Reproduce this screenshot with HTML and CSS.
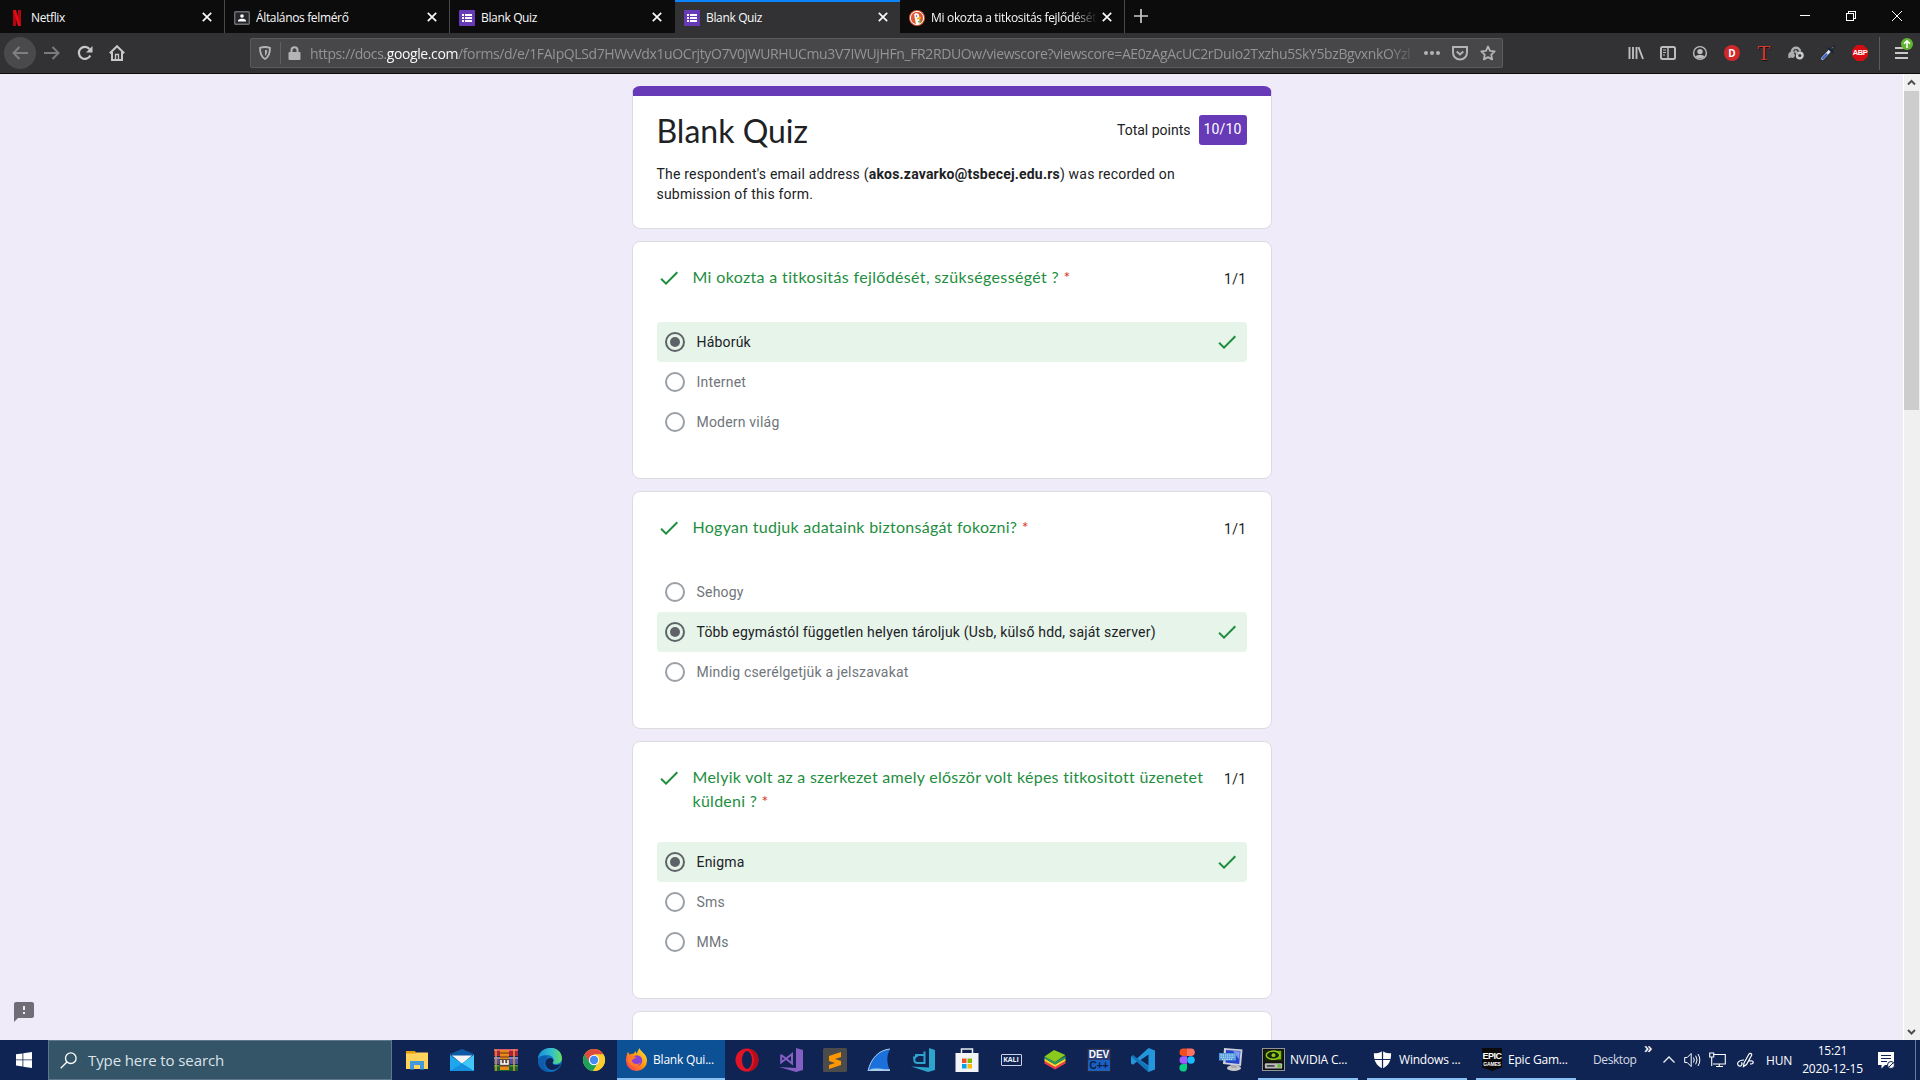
FILE: index.html
```html
<!DOCTYPE html>
<html lang="en">
<head>
<meta charset="utf-8">
<title>Blank Quiz</title>
<link rel="stylesheet" href="styles.css">
</head>
<body>
<svg class="defs" width="0" height="0">
  <symbol id="close" viewBox="0 0 10 10"><path d="M.8.8l8.400 8.400M9.200.8L.8 9.200" stroke="currentColor" stroke-width="1.700" fill="none"/></symbol>
  <symbol id="form" viewBox="0 0 16 16"><rect width="16" height="16" rx="1" fill="#673ab7"/><path d="M3 4h2v2H3zM6 4h7v2H6zM3 7h2v2H3zM6 7h7v2H6zM3 10h2v2H3zM6 10h7v2H6z" fill="#fff"/></symbol>
  <symbol id="check" viewBox="0 0 24 24"><path d="M9 16.200L4.800 12l-1.400 1.400L9 19 21 7l-1.400-1.400z" fill="#1e8e3e"/></symbol>
</svg>
<div class="screen">
  <header class="tabs">
    <div class="tab">
      <svg class="fav" viewBox="0 0 16 16"><path d="M4 0h3v16H4zM9 0h3v16H9z" fill="#b1060f"/><path d="M4 0h3l5 16H9z" fill="#e50914"/></svg>
      <span class="tab-name">Netflix</span><svg class="x"><use href="#close"/></svg>
    </div>
    <div class="tab">
      <svg class="fav" viewBox="0 0 16 16"><rect x=".7" y="1.700" width="14.600" height="12.600" rx="1" fill="#25272a" stroke="#6b6e73" stroke-width="1.400"/><circle cx="8" cy="6" r="1.800" fill="#fff"/><path d="M4 11.500V10.500C4 9.200 6.500 8.700 8 8.700s4 .5 4 1.800v1z" fill="#fff"/></svg>
      <span class="tab-name">Általános felmérő</span><svg class="x"><use href="#close"/></svg>
    </div>
    <div class="tab">
      <svg class="fav"><use href="#form"/></svg>
      <span class="tab-name">Blank Quiz</span><svg class="x"><use href="#close"/></svg>
    </div>
    <div class="tab active">
      <svg class="fav"><use href="#form"/></svg>
      <span class="tab-name">Blank Quiz</span><svg class="x"><use href="#close"/></svg>
    </div>
    <div class="tab">
      <svg class="fav" viewBox="0 0 16 16"><circle cx="8" cy="8" r="8" fill="#de5833"/><circle cx="8" cy="8" r="6.600" fill="none" stroke="#fff" stroke-width="1"/><path d="M5.200 5C5.200 2.500 10.300 2.500 10.300 6.500L10.800 13.600Q8.800 14.600 6.800 13.800z" fill="#fff"/><circle cx="7.500" cy="6" r=".8" fill="#2d4f8e"/><path d="M8 7.800l4-.8v1.600l-3.800.8z" fill="#fdb20a"/><path d="M9 11l2.800-.8v2.500l-2.800-.4z" fill="#65bc46"/></svg>
      <span class="tab-name long">Mi okozta a titkositás fejlődését, szükségességét</span><svg class="x"><use href="#close"/></svg>
    </div>
    <svg class="plus" viewBox="0 0 14 14"><path d="M7 0v14M0 7h14" stroke="#c9c9ca" stroke-width="1.700"/></svg>
    <div class="win">
      <svg viewBox="0 0 46 32"><path d="M18 15.500h10" stroke="#fff"/></svg>
      <svg viewBox="0 0 46 32"><path d="M18.500 13.500h7v7h-7zM20.500 13.500v-2h7v7h-2" stroke="#fff" fill="none"/></svg>
      <svg viewBox="0 0 46 32"><path d="M18 11l10 10M28 11L18 21" stroke="#fff"/></svg>
    </div>
  </header>

  <nav class="toolbar">
    <div class="navs">
      <span class="slot back"><svg width="16" height="16" viewBox="0 0 16 16"><path d="M16 8H1.500M7.500 2L1.500 8l6 6" fill="none" stroke="#7f7f81" stroke-width="2"/></svg></span>
      <span class="slot"><svg width="16" height="16" viewBox="0 0 16 16"><path d="M0 8h14.500M8.500 2l6 6-6 6" fill="none" stroke="#7b7b7d" stroke-width="2"/></svg></span>
      <span class="slot"><svg width="16" height="16" viewBox="0 0 16 16"><path d="M13.300 10.500A6 6 0 1 1 12.500 4" fill="none" stroke="#c8c8c9" stroke-width="2.200"/><path d="M15.500 1v6.500H9z" fill="#c8c8c9"/></svg></span>
      <span class="slot"><svg width="16" height="16" viewBox="0 0 16 16"><path d="M.8 8.200L8 1.200l7.200 7M3 7v7.900h10V7" fill="none" stroke="#c8c8c9" stroke-width="2"/><path d="M6.500 14V9.500h3V14" fill="none" stroke="#c8c8c9" stroke-width="1.300"/></svg></span>
    </div>
    <div class="urlbar">
      <svg class="shield" width="12" height="14" viewBox="0 0 12 14"><path d="M6 1c1.500 0 3.500.3 5 .8C11 7 10 11 6 13 2 11 1 7 1 1.800 2.500 1.300 4.500 1 6 1z" fill="none" stroke="#b4b4b5" stroke-width="1.800"/><path d="M6 4v6c1.500-1.500 2.200-3.500 2.300-5.600C7.500 4.100 7 4 6 4z" fill="#b4b4b5"/></svg>
      <i class="bar"></i>
      <svg class="lock" width="13" height="14" viewBox="0 0 13 14"><path d="M3.500 7V4.200a3 3 0 0 1 6 0V7" fill="none" stroke="#b4b4b5" stroke-width="2"/><rect x=".5" y="6" width="12" height="8" rx="1" fill="#b4b4b5"/></svg>
      <div class="url"><span>https://docs.</span><span class="host">google.com</span><span>/forms/d/e/1FAIpQLSd7HWvVdx1uOCrjtyO7V0jWURHUCmu3V7IWUjHFn_FR2RDUOw/viewscore?viewscore=AE0zAgAcUC2rDuIo2Txzhu5SkY5bzBgvxnkOYzl</span></div>
      <div class="acts">
        <svg viewBox="0 0 16 16"><circle cx="2" cy="8" r="2"/><circle cx="8" cy="8" r="2"/><circle cx="14" cy="8" r="2"/></svg>
        <svg viewBox="0 0 16 16"><path d="M1 2h14v5.500a7 7 0 0 1-14 0z" fill="none" stroke="#b4b4b5" stroke-width="2"/><path d="M4.700 6.500L8 9.500l3.300-3" fill="none" stroke="#b4b4b5" stroke-width="2"/></svg>
        <svg viewBox="0 0 16 16"><path d="M8 1.500l2 4.300 4.700.6-3.400 3.300.8 4.700L8 12.100l-4.100 2.300.8-4.700L1.300 6.400 6 5.800z" fill="none" stroke="#b4b4b5" stroke-width="1.800" stroke-linejoin="round"/></svg>
      </div>
    </div>
    <div class="exts">
      <span class="slot"><svg viewBox="0 0 16 16"><path d="M1.500 2v12M5 2v12M8.500 2v12M10.500 2.200L15 14" stroke="#bdbdbe" stroke-width="1.900"/></svg></span>
      <span class="slot"><svg viewBox="0 0 16 16"><rect x="1" y="2" width="14" height="12" rx="1.500" fill="none" stroke="#bdbdbe" stroke-width="2"/><path d="M8 2v12" stroke="#bdbdbe" stroke-width="1.500"/><path d="M3 5h3M3 7.500h3M3 10h2" stroke="#bdbdbe"/></svg></span>
      <span class="slot"><svg viewBox="0 0 16 16"><circle cx="8" cy="8" r="6.400" fill="none" stroke="#bdbdbe" stroke-width="1.400"/><circle cx="8" cy="6.600" r="2.700" fill="#bdbdbe"/><path d="M3.500 11.500C5 9.600 11 9.600 12.500 11.500 11 14 5 14 3.500 11.500z" fill="#bdbdbe"/></svg></span>
      <span class="slot"><b class="dis">D</b></span>
      <span class="slot"><b class="tt">T</b></span>
      <span class="slot"><svg viewBox="0 0 16 16" fill="none" stroke="#aeb0b0" stroke-width="2.400"><path d="M1.500 13V9.500A3 3 0 0 1 6 8M4 6.500a4 3.800 0 0 1 8 0"/><circle cx="11.800" cy="10.500" r="2.800" stroke="#c9cbcb"/><circle cx="4.500" cy="10.500" r="1.200"/><path d="M7 5.500l3 4"/></svg></span>
      <span class="slot"><svg viewBox="0 0 16 16"><path d="M2.500 13.500L10 5.500" stroke="#dfe8f2" stroke-width="2.600" stroke-linecap="round"/><path d="M2.800 13.200L6.500 9.300" stroke="#3468d8" stroke-width="2" stroke-linecap="round"/><path d="M9 3.500l3.500 3.500M11 5.500l3-3.500" stroke="#1a2433" stroke-width="2.400" stroke-linecap="round"/><path d="M12 3.500l1.500-1.500" stroke="#8d97a5"/></svg></span>
      <span class="slot"><b class="abp">ABP</b></span>
    </div>
    <i class="bar2"></i>
    <div class="menu"><i></i><i></i><i></i>
      <svg class="badge" viewBox="0 0 12 12"><circle cx="6" cy="6" r="6" fill="#62b532"/><path d="M6 10V3M3 5.800L6 2.800l3 3" fill="none" stroke="#fff" stroke-width="1.500"/></svg>
    </div>
  </nav>

  <main class="page">
    <div class="forms">
      <section class="card head">
        <div class="headrow"><h1>Blank Quiz</h1><div class="total"><span>Total points</span><span class="score">10/10</span></div></div>
        <p>The respondent's email address (<b>akos.zavarko@tsbecej.edu.rs</b>) was recorded on<br>submission of this form.</p>
      </section>

      <section class="card">
        <div class="q"><svg class="ck"><use href="#check"/></svg><h2 class="q1">Mi okozta a titkositás fejlődését, szükségességét ? <em>*</em></h2><span class="pts">1/1</span></div>
        <div class="opt right"><i class="radio on"></i><span>Háborúk</span><svg class="ck"><use href="#check"/></svg></div>
        <div class="opt"><i class="radio"></i><span>Internet</span></div>
        <div class="opt"><i class="radio"></i><span>Modern világ</span></div>
      </section>

      <section class="card">
        <div class="q"><svg class="ck"><use href="#check"/></svg><h2>Hogyan tudjuk adataink biztonságát fokozni? <em>*</em></h2><span class="pts">1/1</span></div>
        <div class="opt"><i class="radio"></i><span>Sehogy</span></div>
        <div class="opt right"><i class="radio on"></i><span>Több egymástól független helyen tároljuk (Usb, külső hdd, saját szerver)</span><svg class="ck"><use href="#check"/></svg></div>
        <div class="opt"><i class="radio"></i><span>Mindig cserélgetjük a jelszavakat</span></div>
      </section>

      <section class="card">
        <div class="q two"><svg class="ck"><use href="#check"/></svg><h2>Melyik volt az a szerkezet amely először volt képes titkositott üzenetet<br>küldeni ? <em>*</em></h2><span class="pts">1/1</span></div>
        <div class="opt right"><i class="radio on"></i><span>Enigma</span><svg class="ck"><use href="#check"/></svg></div>
        <div class="opt"><i class="radio"></i><span>Sms</span></div>
        <div class="opt"><i class="radio"></i><span>MMs</span></div>
      </section>

      <section class="card next"></section>
    </div>
    <svg class="report" viewBox="2 2 20 20"><path d="M20 2H4c-1.100 0-2 .9-2 2v18l4-4h14c1.100 0 2-.9 2-2V4c0-1.100-.9-2-2-2zm-7 12h-2v-2h2v2zm0-4h-2V6h2v4z" fill="#716d77"/></svg>
    <div class="scroll">
      <svg viewBox="0 0 17 17"><path d="M5 10.500L8.500 7l3.500 3.500" fill="none" stroke="#505050" stroke-width="2"/></svg>
      <div class="thumb"></div>
      <svg class="down" viewBox="0 0 17 17"><path d="M5 7l3.500 3.500L12 7" fill="none" stroke="#505050" stroke-width="2"/></svg>
    </div>
  </main>

  <footer class="taskbar">
    <div class="start"><svg width="16" height="16" viewBox="0 0 16 16"><path d="M0 2.300l6.500-.9v6.100H0zM7.300 1.300L16 0v7.500H7.300zM0 8.300h6.500v6.200L0 13.600zM7.300 8.300H16V16l-8.700-1.300z" fill="#fff"/></svg></div>
    <div class="search"><svg width="17" height="17" viewBox="0 0 17 17"><circle cx="10.800" cy="6.200" r="5.300" fill="none" stroke="#fff" stroke-width="1.300"/><path d="M7 10L.7 16.300" stroke="#fff" stroke-width="1.300"/></svg><span>Type here to search</span></div>
    <div class="apps">
      <span><svg viewBox="0 0 24 24"><path d="M0 4.500h22v16.500H0z" fill="#ffd35c"/><path d="M0 3h9l1.500 2.500H0z" fill="#e5a00d"/><path d="M4 13h14v8.500h-4V17H8v4.500H4z" fill="#3f9bdc"/></svg></span>
      <span><svg viewBox="0 0 24 24"><path d="M0 6l12-5 12 5v3H0z" fill="#0c59a4"/><path d="M2 7.500h20L12 16z" fill="#f4f4f4"/><path d="M0 7l12 8.500L24 7v16H0z" fill="#1fa7ee"/><path d="M24 7v16L12 15.500z" fill="#40c6f7"/><path d="M0 23l12-7.500L24 23z" fill="#1490df"/></svg></span>
      <span><svg viewBox="0 0 24 24"><path d="M0 1h24v7H0z" fill="#b0203c"/><path d="M0 1h24v2H0z" fill="#dc5b72"/><path d="M0 9h24v7H0z" fill="#5351a8"/><path d="M0 9h24v2H0z" fill="#8786cf"/><path d="M0 17h24v6H0z" fill="#17632b"/><path d="M0 17h24v1.500H0z" fill="#40a351"/><path d="M2 1v22M20 1v22" stroke="#d59b35" stroke-width="1.500"/><path d="M6 2h9v20H6z" fill="#e68a1b"/><path d="M6 5h9M6 9h9M6 18h9" stroke="#6c3010"/><path d="M5 11h11v7H5z" fill="#5b4638"/><path d="M7 12v4h7v-4M10.500 12v4" fill="none" stroke="#fff" stroke-width="1.500"/></svg></span>
      <span><svg viewBox="0 0 24 24"><defs><linearGradient id="eg" x2="1"><stop stop-color="#1690dc"/><stop offset=".6" stop-color="#35c1c8"/><stop offset="1" stop-color="#68e05b"/></linearGradient></defs><circle cx="12" cy="12" r="12" fill="#1173c7"/><path d="M0 10C2-3 23-4 24 10c0 5-4 6-7 6-2 0-3-1-2-2 2-3-1-7-6-7-4 0-7 1-9 5z" fill="url(#eg)"/><path d="M15 14c-1 1 0 3 3 3 2 0 3.500-.5 5-1.500C20 23 11 24 8 18c-2-4 1-8 4-8 3 0 4 2 3 4z" fill="#102454"/><path d="M8 12c-4 4 0 11 6 11.800C4 25-1 18 0 11c2-4 7-4 10-2-1 1-1 1-2 3z" fill="#0e5cad"/></svg></span>
      <span><svg viewBox="0 0 24 24"><circle cx="12" cy="12" r="11" fill="#fccd2d"/><path d="M2.500 6.500A11 11 0 0 1 21.500 6.500H12l-5 8z" fill="#de4b3d"/><path d="M2.500 6.500A11 11 0 0 0 11 23l5-8.500H7.500z" fill="#1ba15b"/><path d="M12 6.500h9.500A11 11 0 0 1 11 23l6-9z" fill="#fccd2d"/><circle cx="12" cy="12" r="5.200" fill="#fff"/><circle cx="12" cy="12" r="4.200" fill="#4689f2"/></svg></span>
    </div>
    <div class="task current"><svg viewBox="0 0 24 24"><defs><linearGradient id="ff" x1="1" y1="0" x2="0" y2="1"><stop stop-color="#fff044"/><stop offset=".45" stop-color="#ff980e"/><stop offset="1" stop-color="#ff2a60"/></linearGradient></defs><path d="M3 4l2 3c1-1 3-1 4-1l2-3 1 3 3-6c1 4 8 6 8 13a11 11 0 0 1-22 0C1 9 2 7 3 4z" fill="url(#ff)"/><circle cx="12.500" cy="13" r="5.500" fill="#8a42d6"/><path d="M4 9c4-2 7 0 8 2-3-1-3 1-5 2 1 4 6 5 9 2-1 5-11 6-13-2z" fill="#ff7a28"/></svg><span>Blank Qui...</span></div>
    <div class="apps">
      <span><svg viewBox="0 0 24 24"><ellipse cx="12" cy="12" rx="11.500" ry="11.500" fill="#e31426"/><path d="M13 1c14 0 14 22 0 22 8-4 8-18 0-22z" fill="#b40d1c"/><ellipse cx="12" cy="12" rx="5" ry="9" fill="#102454"/></svg></span>
      <span><svg viewBox="0 0 24 24"><path d="M17 0l7 2v20l-7 2L0 19l17 1z" fill="#865fc5"/><path d="M2.200 6.500v8L13 6v9.500L2.200 7" fill="none" stroke="#865fc5" stroke-width="2"/></svg></span>
      <span><svg viewBox="0 0 24 24"><rect width="24" height="24" rx="1.500" fill="#4b4b4b"/><path d="M6 8l12-4v5l-6 2 6 2v4L6 21v-4l6-2-6-2z" fill="#ff9800"/></svg></span>
      <span><svg viewBox="0 0 24 24"><path d="M1 23C4 10 12 2 23 1c-4 7-3 15 0 22z" fill="#1b70dc"/><path d="M1 23C4 10 12 2 23 1" fill="none" stroke="#a9d0f4"/><path d="M1 23c5-5 15-1 22-2v2z" fill="#a8cbe8"/></svg></span>
      <span><svg viewBox="0 0 24 24"><path d="M18 0l6 2v20l-7 2L0 18.500l18 1z" fill="#2da4cb"/><path d="M2 9.500h3M4 7h9.500v8H7c-5 0-5-6 0-7.500M13.500 7V3.500" fill="none" stroke="#2da4cb" stroke-width="2"/></svg></span>
      <span><svg viewBox="0 0 24 24"><path d="M6.500 7V1h11v6" fill="none" stroke="#e9ebee" stroke-width="1.500"/><path d="M.5 5h23v19H.5z" fill="#f3f4f5"/><path d="M7 10.500h4.500V15H7z" fill="#f25022"/><path d="M12.500 10.500H17V15h-4.500z" fill="#7fba00"/><path d="M7 16h4.500v4.500H7z" fill="#00a4ef"/><path d="M12.500 16H17v4.500h-4.500z" fill="#ffb900"/></svg></span>
      <span><b class="kali">KALI</b></span>
      <span><svg viewBox="0 0 24 24"><path d="M1.500 13l10.500 6 10.500-6v2.500L12 21.500l-10.500-6z" fill="#f4374b"/><path d="M1.500 10.500l10.500 6 10.500-6V13L12 19l-10.500-6z" fill="#ffd32b"/><path d="M1.500 8.500L12 14l10.500-6v2.500L12 16.500l-10.500-6z" fill="#2a9b62"/><path d="M1.500 8.500L11 2l11.500 5L12 14z" fill="#8bc91d"/></svg></span>
      <span><b class="dev"><span>DEV</span><u>C++</u></b></span>
      <span><svg viewBox="0 0 24 24"><path d="M17.500 0L24 2.500v19L17.500 24 6 13.500l-4 3.200L0 15.500v-7l2-1.200 4 3.200zM17.500 6.500L9.500 12l8 5.500z" fill="#2497dc"/><path d="M17.500 24L0 8.500l2-1.200 15.500 11z" fill="#1374b8"/></svg></span>
      <span><svg viewBox="0 0 24 24"><path d="M8.300.5H12v7.600H8.300a3.800 3.800 0 0 1 0-7.600z" fill="#f24e1e"/><path d="M12 .5h4a3.800 3.800 0 0 1 0 7.600h-4z" fill="#ff7262"/><path d="M8.300 8.200H12v7.600H8.300a3.800 3.800 0 0 1 0-7.600z" fill="#a259ff"/><circle cx="16" cy="12" r="3.800" fill="#1abcfe"/><path d="M8.300 16H12v4a3.800 3.800 0 1 1-3.700-4z" fill="#0acf83"/></svg></span>
      <span><svg viewBox="0 0 24 24"><ellipse cx="15" cy="20" rx="7" ry="3" fill="#c9c9c9"/><path d="M12 15h6v5h-6z" fill="#a9abb0"/><path d="M5 0l18.500 1.500L22 18 4 16z" fill="#cfd1d8"/><path d="M7 2l14.500 1-1.300 13L6.500 14.500z" fill="#2743cb"/><path d="M14 3l7 .5-.8 8z" fill="#7f9af0"/><path d="M0 5h17v7.500H0z" fill="#4f9ad9"/><path d="M1.500 7h14M1.500 9.200h14M3 11.300h11" stroke="#e5f2fd" stroke-dasharray="1.300 .9"/></svg></span>
    </div>
    <div class="task t1"><svg viewBox="0 0 24 24"><rect x=".5" y=".5" width="23" height="23" fill="#111" stroke="#999"/><path d="M2.500 2h19v12h-19z" fill="#18230a"/><path d="M12 3h8v9h-8z" fill="#76b900"/><ellipse cx="11.500" cy="7.500" rx="7" ry="4.300" fill="#18230a" stroke="#8fce1e" stroke-width="1.500"/><circle cx="12" cy="7.500" r="2" fill="#8fce1e"/><rect x="3" y="16" width="18" height="5.500" rx="1" fill="#bbb"/><path d="M5 18.700h8" stroke="#333" stroke-width="1.600"/><circle cx="18" cy="18.700" r="2" fill="#65c02b"/></svg><span>NVIDIA C...</span></div>
    <div class="task t2"><svg viewBox="0 0 24 24"><path d="M12 3c3 2 6 2.500 9 2.500C21 13 19 18 12 21.500 5 18 3 13 3 5.500 6 5.500 9 5 12 3z" fill="#fff"/><path d="M12 3v19M3 12h18" stroke="#102454" stroke-width="1.300"/></svg><span>Windows ...</span></div>
    <div class="task t3"><b class="epic">EPIC<small>GAMES</small></b><span>Epic Gam...</span></div>
    <div class="desk"><span>Desktop</span><sup>»</sup></div>
    <div class="tray">
      <svg width="14" height="16" viewBox="0 0 14 16"><path d="M1.500 10.500L7 5l5.500 5.500" fill="none" stroke="#eef0f5" stroke-width="1.300"/></svg>
      <svg width="17" height="16" viewBox="0 0 17 16"><path d="M.7 5.500h2.500l4-4v13l-4-4H.7z" fill="none" stroke="#fff"/><path d="M9.500 5.500q1.500 2.500 0 5M11.700 3.700q2.700 4.300 0 8.600M14 2q3.700 6 0 12" fill="none" stroke="#fff"/></svg>
      <svg width="17" height="16" viewBox="0 0 17 16"><path d="M5 2.500h11.300v9.500H4M7 14.500h7M10.300 12v2.500M.7 1h4v4h-4zM2.700 5v9" fill="none" stroke="#fff" stroke-width="1.100"/></svg>
      <svg class="pen" width="17" height="17" viewBox="0 0 17 17"><path d="M7 11l5-9c1-1.500 3.500 0 2.500 1.500l-5 9-3 2zM12 9c6-1 5 3 1 3M7 8c-6 0-8 4-5 6 3 1 4-4 2-3" fill="none" stroke="#fff" stroke-width="1.200"/></svg>
      <span class="lang">HUN</span>
      <div class="clock"><span>15:21</span><span>2020-12-15</span></div>
      <svg class="note" width="17" height="17" viewBox="0 0 17 17"><path d="M0 0h16v13H7l-3.500 3.500V13H0z" fill="#fff"/><path d="M3 3.500h10M3 6.500h10M3 9.500h6" stroke="#102454" stroke-width="1.200"/><circle cx="13" cy="13" r="3.500" fill="#fff" stroke="#102454"/><path d="M11 15l4-4" stroke="#102454"/></svg>
      <i class="peek"></i>
    </div>
  </footer>
</div>
</body>
</html>
```
FILE: styles.css
```css
* { box-sizing: border-box; }
body { margin: 0; overflow: hidden; }
svg { display: block; flex: none; }
.defs { position: absolute; }
.screen { width: 1920px; height: 1080px; display: flex; flex-direction: column; background: #f0ebf8; font-family: "Open Sans", "Noto Sans", sans-serif; }

/* tab strip */
.tabs { height: 33px; flex: none; display: flex; background: #0c0c0d; color: #f9f9fa; }
.tab { width: 225px; display: flex; align-items: center; padding: 2px 12px 0 9px; border-right: 1px solid #4a4a4c; }
.tab:nth-child(3) { border-color: #0c0c0d; }
.tab.active { background: #323234; border-top: 2px solid #0a84ff; border-right: 0; padding-top: 0; }
.fav { width: 16px; height: 16px; }
.tab-name { flex: 1; min-width: 0; margin: 0 11px 0 6px; font-size: 12px; line-height: 18px; letter-spacing: -.35px; white-space: nowrap; overflow: hidden; }
.long { margin-right: 5px; letter-spacing: -.32px; -webkit-mask-image: linear-gradient(90deg, #000 85%, transparent); mask-image: linear-gradient(90deg, #000 85%, transparent); }
.x { width: 10px; height: 10px; }
.tab .x { margin-bottom: 1px; }
.plus { width: 14px; height: 14px; margin: 9px 0 0 9px; }
.win { display: flex; margin-left: auto; }
.win svg { width: 46px; height: 32px; shape-rendering: crispEdges; }

/* toolbar */
.toolbar { height: 41px; flex: none; display: flex; align-items: center; background: #323234; border-bottom: 1px solid #0c0c0d; }
.navs { display: flex; width: 250px; padding-left: 4px; }
.slot { width: 32px; height: 32px; display: flex; align-items: center; justify-content: center; margin-right: .4px; }
.back { border-radius: 50%; background: #4a4a4c; }
.urlbar { width: 1253px; height: 30px; display: flex; align-items: center; background: #474749; border: 1px solid #5b5b5d; border-radius: 2px; padding: 0 6px 0 8px; }
.bar { width: 1px; height: 22px; background: #606062; margin: 0 7px 0 9px; }
.url { width: 1107px; margin-left: 9px; padding-top: 1px; overflow: hidden; white-space: nowrap; font-size: 14px; line-height: 22px; letter-spacing: -.39px; color: #949496; -webkit-mask-image: linear-gradient(90deg, #000 97.500%, transparent); mask-image: linear-gradient(90deg, #000 97.500%, transparent); }
.host { color: #f9f9fa; }
.acts { margin-left: auto; display: flex; gap: 12px; }
.acts svg { width: 16px; height: 16px; fill: #b4b4b5; }
.exts { display: flex; margin-left: 117px; }
.exts .slot { margin: 0; }
.exts svg { width: 16px; height: 16px; }
.dis { width: 16px; height: 16px; border-radius: 50%; background: #d1282c; color: #fff; font-size: 10px; line-height: 16px; text-align: center; }
.tt { color: #d8392b; font: 21px/20px "Liberation Serif", serif; text-shadow: 1px 1px 0 #111; }
.abp { width: 16px; height: 16px; background: #d40d12; color: #fff; clip-path: polygon(30% 0, 70% 0, 100% 30%, 100% 70%, 70% 100%, 30% 100%, 0 70%, 0 30%); font: bold 7.500px/16px "Liberation Sans", sans-serif; letter-spacing: -.4px; text-align: center; }
.bar2 { width: 1px; height: 33px; background: #5b5b5d; margin-left: 3px; }
.menu { position: relative; margin-left: 15px; width: 13px; display: flex; flex-direction: column; gap: 3px; }
.menu i { height: 2px; background: #c8c8c9; }
.badge { position: absolute; width: 12px; height: 12px; left: 6px; top: -9px; }

/* form page */
.page { position: relative; height: 966px; flex: none; overflow: hidden; display: flex; justify-content: center; padding: 12px 17px 0 0; font-family: Roboto, sans-serif; color: #202124; }
.forms { width: 640px; }
.card { height: 238px; background: #fff; border: 1px solid #dadce0; border-radius: 8px; padding: 0 24px; margin-bottom: 12px; }
.card.head { height: 143px; border-top: 10px solid #673ab7; overflow: hidden; }
.head { position: relative; }
.headrow { display: flex; justify-content: space-between; padding-top: 13px; }
h1 { margin: 0; font: 400 32px/43px Lato, sans-serif; }
.total { display: flex; align-items: center; gap: 8px; height: 28px; margin-top: 7px; font-size: 14px; }
.score { background: #673ab7; color: #fff; width: 48px; line-height: 28px; height: 30px; border-radius: 3px; text-align: center; letter-spacing: .2px; }
.head p { margin: 12px 0 0; font-size: 14px; line-height: 20px; letter-spacing: .2px; white-space: nowrap; }
.q { height: 80px; display: flex; padding-top: 24px; }
.two { height: 100px; }
.ck { width: 24px; height: 24px; }
.q .ck { margin-right: 12px; }
h2 { flex: 1; margin: -1px 0 0; font: 400 16px/24px Lato, sans-serif; letter-spacing: .27px; color: #1e8e3e; white-space: nowrap; }
.q1 { letter-spacing: .35px; }
em { font-style: normal; color: #d93025; }
.pts { font-size: 14px; line-height: 26px; letter-spacing: .3px; }
.opt { height: 40px; display: flex; align-items: center; padding: 0 8px; border-radius: 4px; font-size: 14px; letter-spacing: .2px; color: #70757a; }
.opt span { flex: 1; white-space: nowrap; }
.right { background: #e6f4ea; color: #202124; }
.radio { width: 20px; height: 20px; border: 2px solid #9aa0a6; border-radius: 50%; margin-right: 12px; display: grid; place-items: center; }
.on { border-color: #5f6368; }
.on::after { content: ""; width: 10px; height: 10px; border-radius: 50%; background: #5f6368; }
.card:nth-child(4) { height: 258px; }
.report { position: absolute; left: 14px; top: 928px; width: 20px; height: 20px; }
.scroll { position: absolute; right: 0; top: 0; width: 17px; height: 966px; background: #f0f0f0; border-left: 1px solid #fff; display: flex; flex-direction: column; }
.scroll svg { width: 17px; height: 17px; margin-left: -1px; }
.thumb { height: 319px; margin-right: 1px; background: #cdcdcd; }
.down { margin-top: auto; }

/* taskbar */
.taskbar { height: 40px; flex: none; display: flex; background: #102454; color: #fff; font-size: 12px; }
.start { width: 48px; display: grid; place-items: center; }
.search { width: 344px; background: #345468; border: 1px solid #5d788a; display: flex; align-items: center; padding: 0 11px; gap: 11px; margin-right: 4px; font-size: 15px; letter-spacing: -.1px; color: #dce3e8; }
.apps { display: flex; }
.apps > span { width: 44px; display: grid; place-items: center; }
.apps svg { width: 24px; height: 24px; }
.kali { width: 21px; height: 12px; border: 1px solid #ccd3e4; font-size: 7px; line-height: 10px; text-align: center; color: #ecf0fa; border-radius: 1px; }
.dev { width: 24px; height: 24px; background: #273c72; border: 1px solid #222a3c; font: bold 10px/11px "Liberation Sans", sans-serif; text-align: center; }
.dev span, .dev u { display: block; height: 11px; }
.dev u { text-decoration: none; background: #1b5fc0; color: #0b1c44; }
.task { width: 100px; margin-right: 9px; display: flex; align-items: center; padding: 1px 0 0 4px; border-bottom: 2px solid #89c1f5; white-space: nowrap; letter-spacing: -.2px; }
.task svg { width: 23px; height: 23px; margin-right: 5px; }
.t1 { margin-left: 5px; }
.current { width: 108px; margin: 0 0 0 1px; background: #0c5096; padding-left: 8px; }
.epic { width: 20px; height: 23px; margin: 0 6px 0 2px; background: #0a0a0a; font: bold 9px/10px "Liberation Sans", sans-serif; letter-spacing: -.5px; text-align: center; padding-top: 3px; clip-path: polygon(0 0, 100% 0, 100% 85%, 50% 100%, 0 85%); }
.epic small { display: block; font-size: 5px; line-height: 6px; letter-spacing: -.2px; }
.desk { margin-left: 8px; line-height: 40px; color: #d5dae5; letter-spacing: -.4px; display: flex; width: 59px; justify-content: space-between; white-space: nowrap; }
.desk sup { font-size: 15px; line-height: 15px; font-weight: 600; color: #fff; }
.tray { flex: 1; display: flex; align-items: center; padding-left: 10px; }
.tray svg { margin-right: 8px; }
.tray .pen { margin: 0 12px 0 3px; }
.lang { width: 27px; letter-spacing: -.2px; }
.clock { width: 79px; display: flex; flex-direction: column; text-align: center; line-height: 18px; letter-spacing: -.2px; }
.tray .note { margin: 0 0 0 6px; }
.peek { width: 1px; height: 40px; background: #6d7b9b; margin-left: auto; margin-right: 4px; }
```
